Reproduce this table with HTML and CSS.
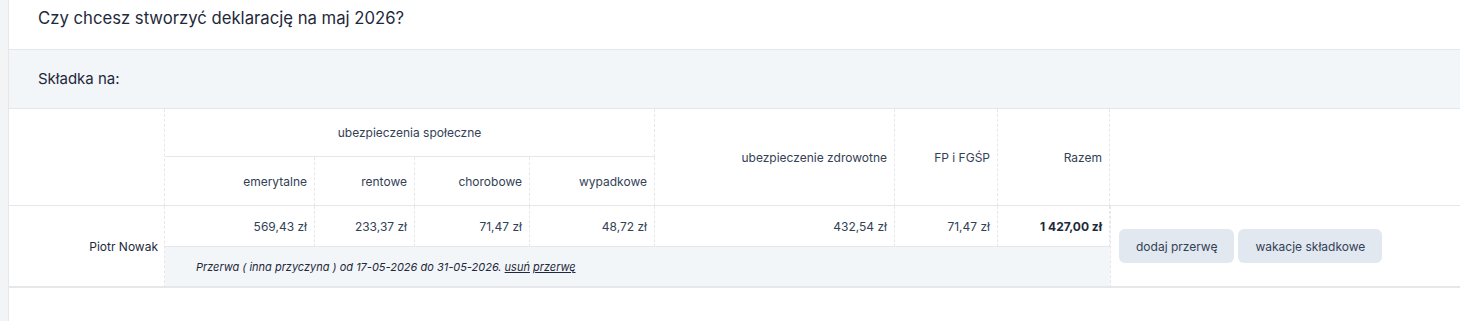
FILE: index.html
```html
<!DOCTYPE html>
<html lang="pl">
<head>
<meta charset="utf-8">
<title>Deklaracja</title>
<link rel="stylesheet" href="styles.css">
</head>
<body>
<div class="page">
  <div class="card">
    <div class="title-bar">
      <h1 class="title">Czy chcesz stworzyć deklarację na maj 2026?</h1>
    </div>
    <div class="section-bar">
      <h2 class="section-title">Składka na:</h2>
    </div>
    <table class="contrib">
      <colgroup>
        <col class="c-name">
        <col class="c-emer">
        <col class="c-rent">
        <col class="c-chor">
        <col class="c-wyp">
        <col class="c-zdr">
        <col class="c-fp">
        <col class="c-raz">
        <col class="c-act">
      </colgroup>
      <thead>
        <tr class="h1">
          <th rowspan="2" class="v"></th>
          <th colspan="4" class="center v">ubezpieczenia społeczne</th>
          <th rowspan="2" class="v">ubezpieczenie zdrowotne</th>
          <th rowspan="2" class="v">FP i FGŚP</th>
          <th rowspan="2" class="v">Razem</th>
          <th rowspan="2"></th>
        </tr>
        <tr class="h2">
          <th class="v">emerytalne</th>
          <th class="v">rentowe</th>
          <th class="v">chorobowe</th>
          <th class="v">wypadkowe</th>
        </tr>
      </thead>
      <tbody>
        <tr class="data">
          <td rowspan="2" class="name v last">Piotr Nowak</td>
          <td class="v">569,43 zł</td>
          <td class="v">233,37 zł</td>
          <td class="v">71,47 zł</td>
          <td class="v">48,72 zł</td>
          <td class="v">432,54 zł</td>
          <td class="v">71,47 zł</td>
          <td class="v total">1 427,00 zł</td>
          <td rowspan="2" class="actions last">
            <div class="btns">
              <button class="btn" type="button">dodaj przerwę</button>
              <button class="btn" type="button">wakacje składkowe</button>
            </div>
          </td>
        </tr>
        <tr class="brk">
          <td colspan="7" class="note last">Przerwa ( inna przyczyna ) od 17-05-2026 do 31-05-2026. <a href="#">usuń</a> <a href="#">przerwę</a></td>
        </tr>
      </tbody>
    </table>
  </div>
</div>
</body>
</html>
```
FILE: styles.css
```css
* { box-sizing: border-box; }
html, body { margin: 0; padding: 0; }
body {
  background: #f3f4f6;
  font-family: Inter, "Noto Sans", "DejaVu Sans", sans-serif;
  color: #1e293b;
}
.page {
  padding-left: 8px;
  min-height: 100vh;
  display: flex;
}
.card {
  flex: 1;
  background: #ffffff;
  border-left: 1px solid #e5e7eb;
  min-height: 100vh;
}
.title-bar {
  height: 50px;
  border-bottom: 1px solid #e5e7eb;
  padding: 8px 29px 0;
}
.title {
  margin: 0;
  font-size: 16.7px;
  line-height: 20px;
  font-weight: 400;
  color: #1e293b;
}
.section-bar {
  height: 59px;
  background: #f3f6f9;
  border-bottom: 1px solid #e5e7eb;
  display: flex;
  align-items: center;
  padding: 0 29px 1px;
}
.section-title {
  margin: 0;
  font-size: 15px;
  font-weight: 400;
  color: #1e293b;
}
.contrib {
  width: 100%;
  table-layout: fixed;
  border-collapse: separate;
  border-spacing: 0;
  font-size: 12px;
  color: #334155;
}
.c-name { width: 156px; }
.c-emer { width: 150px; }
.c-rent { width: 100px; }
.c-chor { width: 115px; }
.c-wyp { width: 125px; }
.c-zdr { width: 240px; }
.c-fp { width: 103px; }
.c-raz { width: 112px; }
.contrib th, .contrib td {
  font-weight: 400;
  text-align: right;
  vertical-align: middle;
  padding: 0 7px 0 7px;
  border-bottom: 1px solid #e5e7eb;
  white-space: nowrap;
}
.contrib .v { border-right: 1px dashed #e5e7eb; }
.contrib .center { text-align: center; }
.h1 { height: 48px; }
.h2 { height: 49px; }
.data { height: 41px; }
.brk { height: 41px; }
.contrib .last { border-bottom: 2px solid #e5e7eb; }
.contrib .total { font-weight: 700; color: #1e293b; }
.contrib .name { color: #1e293b; padding-right: 6px; }
.contrib .note {
  text-align: left;
  background: #f3f6f9;
  font-style: italic;
  font-size: 11px;
  color: #1e293b;
  padding-left: 31px;
  border-right: none;
}
.note a { color: #1e293b; text-decoration: underline; }
.contrib .actions {
  text-align: left;
  padding: 0 8px;
  border-left: 1px dashed #e5e7eb;
}
.btns { display: flex; gap: 4px; }
.btn {
  font-family: inherit;
  font-size: 12px;
  color: #334155;
  background: #e2e8f0;
  border: none;
  border-radius: 6px;
  height: 34px;
  padding: 0 17px;
  cursor: pointer;
}
```
